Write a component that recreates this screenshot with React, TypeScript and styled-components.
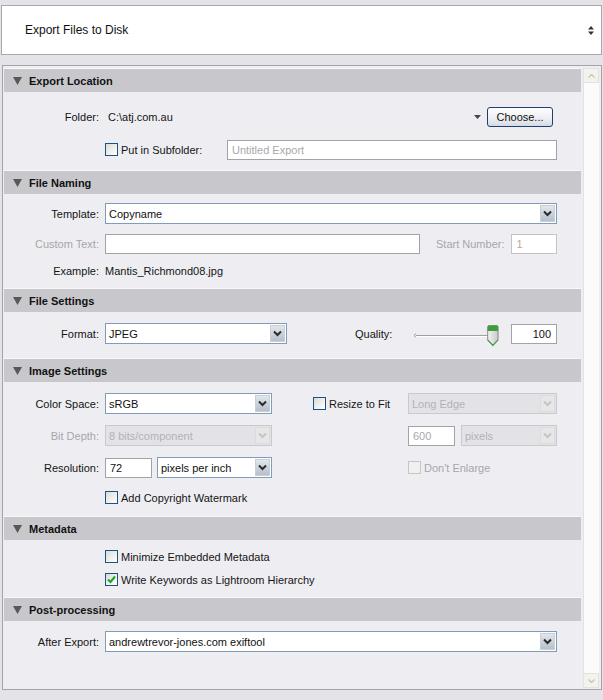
import React from "react";
import styled, { createGlobalStyle } from "styled-components";

const GlobalStyle = createGlobalStyle`
  html, body {
    margin: 0;
    padding: 0;
    background: #e4e4e8;
  }
  body {
    font-family: "Liberation Sans", Arial, sans-serif;
    font-size: 11px;
    color: #141414;
  }
`;

const Page = styled.div`
  width: 603px;
  height: 700px;
  box-sizing: border-box;
  padding: 5px 1px 0 1px;
  display: flex;
  flex-direction: column;
`;

const PresetBar = styled.div`
  height: 50px;
  box-sizing: border-box;
  background: #fff;
  border: 1px solid #a9a9ad;
  display: flex;
  align-items: center;
  justify-content: space-between;
  padding: 0 7px 0 23px;
  font-size: 12px;
  color: #111;
`;

const Panel = styled.div`
  margin: 10px 0 0 1px;
  height: 625px;
  box-sizing: border-box;
  border: 1px solid #a4a4a8;
  background: #eeeef2;
  display: flex;
`;

const Content = styled.div`
  flex: 1;
  padding: 2px 2px 0 1px;
  display: flex;
  flex-direction: column;
`;

const ScrollBar = styled.div`
  width: 16px;
  padding: 2px 2px 1px 0;
  display: flex;
  flex-direction: column;
  background: #eeeef2;
`;

const ScrollTrack = styled.div`
  flex: 1;
  background: #fbfbfb;
  border-left: 1px solid #e2e2e6;
`;

const ScrollButton = styled.div`
  height: 15px;
  box-sizing: border-box;
  border: 1px solid #e3e3da;
  background: #f3f3ee;
  display: flex;
  align-items: center;
  justify-content: center;
`;

const SectionHeader = styled.div`
  height: 23px;
  flex-shrink: 0;
  border-top: 1px solid #f8f8fa;
  background: #c8c8cc;
  display: flex;
  align-items: center;
  gap: 7px;
  padding-left: 9px;
  font-weight: bold;
  font-size: 11px;
  color: #111;
`;

const SectionBody = styled.div<{ $h?: number; $pt: number }>`
  ${(p) => (p.$h ? `height: ${p.$h}px;` : "flex: 1;")}
  flex-shrink: 0;
  box-sizing: border-box;
  padding: ${(p) => p.$pt}px 24px 0 0;
  display: flex;
  flex-direction: column;
`;

const Row = styled.div<{ $mt?: number }>`
  height: 21px;
  margin-top: ${(p) => p.$mt ?? 0}px;
  display: flex;
  align-items: center;
`;

const Label = styled.span<{ $disabled?: boolean }>`
  width: 95px;
  flex-shrink: 0;
  text-align: right;
  color: ${(p) => (p.$disabled ? "#a6a6aa" : "#141414")};
`;

const Text = styled.span<{ $ml?: number; $disabled?: boolean }>`
  margin-left: ${(p) => p.$ml ?? 0}px;
  white-space: nowrap;
  color: ${(p) => (p.$disabled ? "#a6a6aa" : "#141414")};
`;

const SelectBox = styled.div<{ $w?: number; $ml?: number; $disabled?: boolean }>`
  ${(p) => (p.$w ? `width: ${p.$w}px;` : "flex: 1;")}
  margin-left: ${(p) => p.$ml ?? 0}px;
  height: 21px;
  box-sizing: border-box;
  border: 1px solid ${(p) => (p.$disabled ? "#cacace" : "#7f9db9")};
  background: ${(p) => (p.$disabled ? "#e3e3e7" : "#fff")};
  color: ${(p) => (p.$disabled ? "#b2b2b6" : "#111")};
  display: flex;
  align-items: center;
  justify-content: space-between;
  padding: 0 1px 0 3px;
`;

const DropButton = styled.div<{ $disabled?: boolean }>`
  width: 15px;
  height: 17px;
  box-sizing: border-box;
  border: 1px solid ${(p) => (p.$disabled ? "#dcdcdc" : "#c9cfd9")};
  background: ${(p) =>
    p.$disabled ? "#e7e7e7" : "linear-gradient(#e2e6ec, #b7bfcc)"};
  display: flex;
  align-items: center;
  justify-content: center;
`;

const TextInput = styled.div<{ $w?: number; $ml?: number; $right?: boolean; $disabled?: boolean; $placeholder?: boolean }>`
  ${(p) => (p.$w ? `width: ${p.$w}px;` : "flex: 1;")}
  margin-left: ${(p) => p.$ml ?? 0}px;
  height: 20px;
  box-sizing: border-box;
  border: 1px solid ${(p) => (p.$disabled ? "#c4c4c8" : "#a3a3a7")};
  background: #fff;
  display: flex;
  align-items: center;
  justify-content: ${(p) => (p.$right ? "flex-end" : "flex-start")};
  padding: 0 5px 0 4px;
  color: ${(p) => (p.$placeholder ? "#a8a8ac" : p.$disabled ? "#bba88c" : "#111")};
`;

const CheckField = styled.label<{ $ml?: number; $disabled?: boolean }>`
  margin-left: ${(p) => p.$ml ?? 0}px;
  display: flex;
  align-items: center;
  gap: 3px;
  white-space: nowrap;
  color: ${(p) => (p.$disabled ? "#a6a6aa" : "#141414")};
`;

const CheckBox = styled.span<{ $disabled?: boolean }>`
  width: 13px;
  height: 13px;
  box-sizing: border-box;
  border: 1px solid ${(p) => (p.$disabled ? "#c6c6c6" : "#1c5180")};
  background: ${(p) => (p.$disabled ? "#f0f0f0" : "linear-gradient(135deg, #dcdcd6, #fff)")};
  display: flex;
  align-items: center;
  justify-content: center;
`;

const RightGroup = styled.div<{ $w: number }>`
  width: ${(p) => p.$w}px;
  margin-left: auto;
  display: flex;
  align-items: center;
`;

const ChooseButton = styled.button`
  width: 66px;
  height: 20px;
  margin: 0 4px 0 6px;
  padding: 0;
  border: 1px solid #1d3f72;
  border-radius: 3px;
  background: linear-gradient(#ffffff, #ecedf2 60%, #d6dae4);
  font-family: inherit;
  font-size: 11px;
  color: #111;
`;

const Chevron = ({ disabled }: { disabled?: boolean }) => (
  <svg width="9" height="7" viewBox="0 0 9 7">
    <path d="M1 1.5 L4.5 5 L8 1.5" fill="none" stroke={disabled ? "#c4c4c4" : "#2a2a2a"} strokeWidth="2" />
  </svg>
);

const Select = ({ value, w, ml, disabled }: { value: string; w?: number; ml?: number; disabled?: boolean }) => (
  <SelectBox $w={w} $ml={ml} $disabled={disabled}>
    <span>{value}</span>
    <DropButton $disabled={disabled}>
      <Chevron disabled={disabled} />
    </DropButton>
  </SelectBox>
);

const Check = ({ label, checked, disabled, ml }: { label: string; checked?: boolean; disabled?: boolean; ml?: number }) => (
  <CheckField $ml={ml} $disabled={disabled}>
    <CheckBox $disabled={disabled}>
      {checked && (
        <svg width="9" height="9" viewBox="0 0 9 9">
          <path d="M1 4.5 L3.5 7 L8 1.5" fill="none" stroke="#21a121" strokeWidth="2" />
        </svg>
      )}
    </CheckBox>
    {label}
  </CheckField>
);

const Section = ({ title, h, pt, children }: { title: string; h?: number; pt: number; children: React.ReactNode }) => (
  <>
    <SectionHeader>
      <svg width="9" height="8" viewBox="0 0 9 8">
        <path d="M0 0 H9 L4.5 8 Z" fill="#58585c" />
      </svg>
      {title}
    </SectionHeader>
    <SectionBody $h={h} $pt={pt}>
      {children}
    </SectionBody>
  </>
);

const QualitySlider = () => (
  <svg width="96" height="26" viewBox="0 0 96 26" style={{ marginLeft: 14 }}>
    <path d="M10 13 A1.5 1.5 0 0 0 10 16" fill="none" stroke="#9a9a9a" />
    <line x1="10" y1="14.5" x2="84" y2="14.5" stroke="#9c9c9c" />
    <line x1="10" y1="15.5" x2="84" y2="15.5" stroke="#ffffff" />
    <defs>
      <linearGradient id="thumb" x1="0" y1="0" x2="1" y2="0">
        <stop offset="0" stopColor="#f4f4f4" />
        <stop offset="1" stopColor="#c8c8cc" />
      </linearGradient>
    </defs>
    <path d="M82.5 6 Q82.5 4.5 84 4.5 H91.5 Q93 4.5 93 6 V19 L87.75 24.5 L82.5 19 Z" fill="url(#thumb)" stroke="#8a8a8a" />
    <path d="M82.5 10 V6 Q82.5 4.5 84 4.5 H91.5 Q93 4.5 93 6 V10 Z" fill="#3d9e3d" />
    <path d="M82.5 19 L87.75 24.5 L93 19" fill="none" stroke="#3d9e3d" strokeWidth="1.2" />
  </svg>
);

export default function App() {
  return (
    <>
      <GlobalStyle />
      <Page>
        <PresetBar>
          <span>Export Files to Disk</span>
          <svg width="6" height="9" viewBox="0 0 6 9">
            <path d="M0 3.5 L3 0 L6 3.5 Z M0 5.5 L3 9 L6 5.5 Z" fill="#333" />
          </svg>
        </PresetBar>

        <Panel>
          <Content>
            <Section title="Export Location" h={78} pt={14}>
              <Row>
                <Label>Folder:</Label>
                <Text $ml={9}>C:\atj.com.au</Text>
                <svg width="7" height="4" viewBox="0 0 7 4" style={{ marginLeft: "auto" }}>
                  <path d="M0 0 H7 L3.5 4 Z" fill="#444" />
                </svg>
                <ChooseButton>Choose...</ChooseButton>
              </Row>
              <Row $mt={12}>
                <Label />
                <Check ml={6} label="Put in Subfolder:" />
                <RightGroup $w={330}>
                  <TextInput $placeholder>Untitled Export</TextInput>
                </RightGroup>
              </Row>
            </Section>

            <Section title="File Naming" h={94} pt={9}>
              <Row>
                <Label>Template:</Label>
                <Select ml={6} value="Copyname" />
              </Row>
              <Row $mt={9}>
                <Label $disabled>Custom Text:</Label>
                <TextInput $w={315} $ml={6} />
                <RightGroup $w={121}>
                  <Text $disabled>Start Number:</Text>
                  <TextInput $w={46} $ml={7} $disabled>1</TextInput>
                </RightGroup>
              </Row>
              <Row $mt={6}>
                <Label>Example:</Label>
                <Text $ml={6}>Mantis_Richmond08.jpg</Text>
              </Row>
            </Section>

            <Section title="File Settings" h={46} pt={11}>
              <Row>
                <Label>Format:</Label>
                <Select w={182} ml={6} value="JPEG" />
                <RightGroup $w={202}>
                  <Text>Quality:</Text>
                  <QualitySlider />
                  <TextInput $w={46} $ml={10} $right>100</TextInput>
                </RightGroup>
              </Row>
            </Section>

            <Section title="Image Settings" h={134} pt={11}>
              <Row>
                <Label>Color Space:</Label>
                <Select w={167} ml={6} value="sRGB" />
                <Check ml={41} label="Resize to Fit" />
                <RightGroup $w={149}>
                  <Select w={149} value="Long Edge" disabled />
                </RightGroup>
              </Row>
              <Row $mt={11}>
                <Label $disabled>Bit Depth:</Label>
                <Select w={167} ml={6} value="8 bits/component" disabled />
                <RightGroup $w={149}>
                  <TextInput $w={47} $placeholder>600</TextInput>
                  <Select w={96} ml={6} value="pixels" disabled />
                </RightGroup>
              </Row>
              <Row $mt={11}>
                <Label>Resolution:</Label>
                <TextInput $w={47} $ml={6}>72</TextInput>
                <Select w={115} ml={5} value="pixels per inch" />
                <RightGroup $w={149}>
                  <Check disabled label="Don't Enlarge" />
                </RightGroup>
              </Row>
              <Row $mt={9}>
                <Label />
                <Check ml={6} label="Add Copyright Watermark" />
              </Row>
            </Section>

            <Section title="Metadata" h={57} pt={6}>
              <Row>
                <Label />
                <Check ml={6} label="Minimize Embedded Metadata" />
              </Row>
              <Row $mt={2}>
                <Label />
                <Check ml={6} checked label="Write Keywords as Lightroom Hierarchy" />
              </Row>
            </Section>

            <Section title="Post-processing" pt={10}>
              <Row>
                <Label>After Export:</Label>
                <Select ml={6} value="andrewtrevor-jones.com exiftool" />
              </Row>
            </Section>
          </Content>

          <ScrollBar>
            <ScrollButton>
              <svg width="7" height="4" viewBox="0 0 7 4">
                <path d="M0.5 3.5 L3.5 0.5 L6.5 3.5" fill="none" stroke="#c2c2ba" strokeWidth="1.2" />
              </svg>
            </ScrollButton>
            <ScrollTrack />
            <ScrollButton>
              <svg width="7" height="4" viewBox="0 0 7 4">
                <path d="M0.5 0.5 L3.5 3.5 L6.5 0.5" fill="none" stroke="#c2c2ba" strokeWidth="1.2" />
              </svg>
            </ScrollButton>
          </ScrollBar>
        </Panel>
      </Page>
    </>
  );
}
